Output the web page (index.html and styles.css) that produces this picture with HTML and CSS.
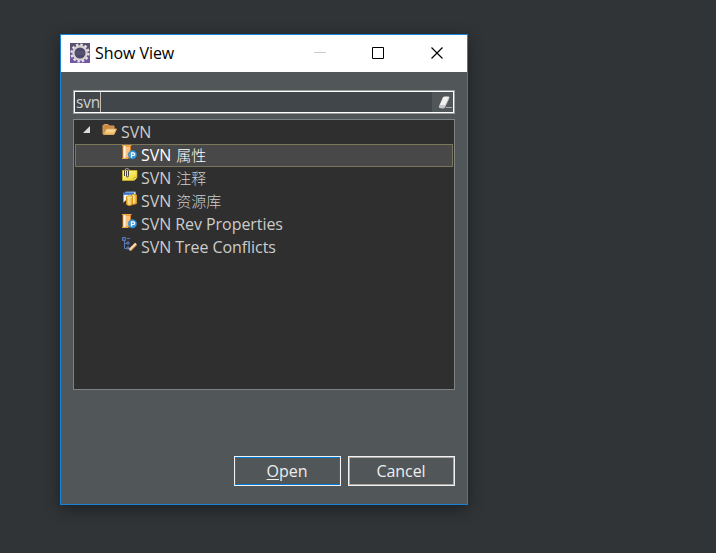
FILE: index.html
```html
<!DOCTYPE html>
<html lang="zh-CN">
<head>
<meta charset="utf-8">
<title>Show View</title>
<link rel="stylesheet" href="styles.css">
</head>
<body>
<svg width="0" height="0" class="defs" aria-hidden="true">
  <defs>
    <linearGradient id="gold"><stop offset="0" stop-color="#e59a20"/><stop offset=".4" stop-color="#ffe89a"/><stop offset="1" stop-color="#e59a20"/></linearGradient>
    <linearGradient id="folder" x2="0" y2="1"><stop offset="0" stop-color="#ffe9b0"/><stop offset="1" stop-color="#e9b45c"/></linearGradient>
    <linearGradient id="note" x2="1" y2="1"><stop offset="0" stop-color="#fffbb0"/><stop offset="1" stop-color="#ecd21c"/></linearGradient>
    <linearGradient id="purple" x2="0" y2="1"><stop offset="0" stop-color="#57506e"/><stop offset="1" stop-color="#7558a8"/></linearGradient>
    <symbol id="props" viewBox="0 0 16 16">
      <path d="M1 1h7.500v12H1z" fill="#fbc27c" stroke="#d8801f"/>
      <path d="M1.500 1h2v12h-2z" fill="#fff4e2"/>
      <path d="M0 .5h9.500M0 13.500h6" stroke="#f5a544"/>
      <circle cx="10.500" cy="9.800" r="4.200" fill="#3f9ade" stroke="#2877b4" stroke-width=".6"/>
      <path d="M9.500 12.500V7.800h1.800a1.200 1.200 0 0 1 0 2.700H9.500" fill="none" stroke="#fff" stroke-width="1.200"/>
    </symbol>
  </defs>
</svg>
<main class="dialog">
  <header class="titlebar">
    <svg class="app-icon" viewBox="0 0 20 20">
      <path fill="url(#purple)" d="M0 0h20v20H0z"/>
      <circle cx="10" cy="10" r="8.300" fill="none" stroke="#e5e1e0" stroke-width="2.600" stroke-dasharray="2.500 1.846"/>
      <circle cx="10" cy="10" r="6.600" fill="#4c4768" stroke="#d6d2d3" stroke-width="2.200"/>
      <path d="M5.500 9h9M5.500 11h9" stroke="#676080" stroke-width=".8"/>
    </svg>
    <h1 class="title">Show View</h1>
    <svg class="window-controls" viewBox="0 0 130 14">
      <path d="M0 5.500h12" stroke="#ccc"/>
      <path d="M58.500 .500h11v11h-11z" fill="none" stroke="#000"/>
      <path d="M117.500 .500l11 11M128.500 .500l-11 11" stroke="#000" stroke-width="1.150"/>
    </svg>
  </header>
  <div class="content">
    <div class="search">
      <div class="query"><span class="query-text">svn</span></div>
      <svg class="eraser" viewBox="0 0 21 20">
        <path d="M7 14L11 5Q12 4 17 4.500Q18 5 17 7L13 15.500Q12 17 7.500 16Q6.500 15.500 7 14z" fill="#c9c9c9"/>
        <path d="M8 13L11.500 5H17l-4 8z" fill="#f0f0ef"/>
        <path d="M14 15.500h6" stroke="#aaa"/>
      </svg>
    </div>
    <ul class="tree">
      <li class="row parent">
        <svg class="arrow" viewBox="0 0 7 7"><path d="M7 0v7H0z" fill="#ddd"/></svg>
        <svg class="icon" viewBox="0 0 16 16"><path d="M1 12V3.500L2 2.500h4l1.500 1.500H12V7" fill="#c98a43" stroke="#df9d59"/><path d="M1.500 12.500L4.500 7h10L12 12.500z" fill="url(#folder)" stroke="#dba35b"/></svg>
        <span class="label">SVN</span>
      </li>
      <li class="row selected"><svg class="icon"><use href="#props"/></svg><span class="label">SVN <span class="cjk">属性</span></span></li>
      <li class="row"><svg class="icon" viewBox="0 0 16 16"><path d="M.5 2.500h14.500v7l-3 3H.5z" fill="url(#note)" stroke="#d9b91c" stroke-width=".7"/><path d="M12 12.500v-3h3" fill="#fff4a0" stroke="#b99a16" stroke-width=".7"/><path d="M2.500 8V2.500Q2.500 .5 4.500 .5T6.500 2.500v5Q6.500 9 5.500 9T4.500 8V3" fill="none" stroke="#47443d"/><path d="M3 2.500Q3 .5 5 .5T7.500 2.500" fill="none" stroke="#c4c1b6" stroke-width=".7"/></svg><span class="label">SVN <span class="cjk">注释</span></span></li>
      <li class="row"><svg class="icon" viewBox="0 0 16 16"><path d="M3.500 2.500V1h10v8M1.500 11.500v-8H10" fill="#f4f8ff" stroke="#6ca2dd"/><path d="M1 2.500h11" stroke="#3975c4" stroke-width="2"/><path d="M9.500 4Q12 2.500 14.500 4v8.500Q12 14 9.500 12.500z" fill="url(#gold)" stroke="#d6941a"/><path d="M4.500 5.500Q7.500 4 10.500 5.500v8Q7.500 15.500 4.500 13.500z" fill="url(#gold)" stroke="#d6941a"/><path d="M5 6q2.500 1 5 0" stroke="#ffe990" fill="none"/></svg><span class="label">SVN <span class="cjk">资源库</span></span></li>
      <li class="row"><svg class="icon"><use href="#props"/></svg><span class="label">SVN Rev Properties</span></li>
      <li class="row"><svg class="icon" viewBox="0 0 16 16"><path d="M2.500 3v8.500H5M2.500 6.500H5M5 1.500h3" fill="none" stroke="#587bb8"/><path d="M.5 .5h3v3h-3zM5 5h2v2H5zM5 10h2v2H5z" fill="#354978" stroke="#587bb8"/><path d="M8 13L14 7" stroke="#a97343" stroke-width="3.200"/><path d="M8 12.500L14 6.500" stroke="#f8dfb5" stroke-width="2.200"/><path d="M6 10.500l3 3-1 .5z" fill="#e9c79c"/></svg><span class="label">SVN Tree Conflicts</span></li>
    </ul>
    <div class="actions">
      <button class="button default"><span><u>O</u>pen</span></button>
      <button class="button"><span>Cancel</span></button>
    </div>
  </div>
</main>
</body>
</html>
```
FILE: styles.css
```css
* { box-sizing: border-box; }
body {
  margin: 0;
  height: 553px;
  padding: 34px 0 0 60px;
  overflow: hidden;
  background: #303437;
  font: 16px "Open Sans", "Noto Sans CJK SC", sans-serif;
  letter-spacing: -.06px;
}
.defs { position: absolute; }
.dialog {
  width: 408px;
  height: 471px;
  border: 1px solid #1883d7;
  background: #515658;
  box-shadow: 0 4px 14px rgba(0, 0, 0, .38);
}
.titlebar {
  display: flex;
  align-items: center;
  height: 37px;
  padding-left: 9px;
  background: #fff;
}
.app-icon { width: 20px; height: 20px; margin: -2px 5px 0 0; }
.title { width: 219px; margin: 0; padding-bottom: 1px; font-size: 16px; font-weight: 400; color: #000; }
.window-controls { width: 130px; height: 14px; }
.content { padding: 18px 12px 0; }
.search {
  display: flex;
  height: 24px;
  border: 1px solid #999d9e;
  outline: 1px solid #fff;
  outline-offset: -2px;
  padding: 1px;
}
.query { flex: 1; height: 20px; background: #41464a; color: #d0d0d0; font-size: 15.5px; line-height: 21px; }
.query-text { display: inline-block; width: 26px; height: 20px; padding-left: 1px; letter-spacing: -.2px; border-right: 1px solid #c8bdb5; }
.eraser { width: 21px; height: 20px; }
.tree {
  height: 271px;
  margin: 5px 0 0;
  padding: 1px;
  list-style: none;
  border: 1px solid #7c8183;
  background: #2f2f2f;
  color: #ccc;
}
.row { display: flex; height: 23px; padding-left: 46px; border: 1px solid transparent; }
.row.parent { padding-left: 7px; }
.row.selected { background: #484848; border-color: #79765a; color: #fff; }
.arrow { width: 7px; height: 7px; margin: 4px 12px 0 0; }
.icon { width: 16px; height: 16px; flex: none; }
.label { margin-left: 3px; line-height: 21px; white-space: pre; }
.cjk { margin-left: 1px; font-family: "Noto Sans CJK SC", sans-serif; font-size: 15px; font-weight: 300; line-height: 1; letter-spacing: 0; }
.actions { display: flex; justify-content: flex-end; gap: 7px; margin-top: 66px; }
.button {
  width: 107px;
  height: 30px;
  padding: 0 1px 1px 0;
  border: 1px solid #f2f2f2;
  box-shadow: inset 0 0 0 1px #aaa7a4;
  background: #515658;
  color: #eee;
  font: inherit;
  letter-spacing: inherit;
}
.button.default { box-shadow: inset 0 0 0 1px #0078d7; }
.button u { text-underline-offset: 2px; }
```
